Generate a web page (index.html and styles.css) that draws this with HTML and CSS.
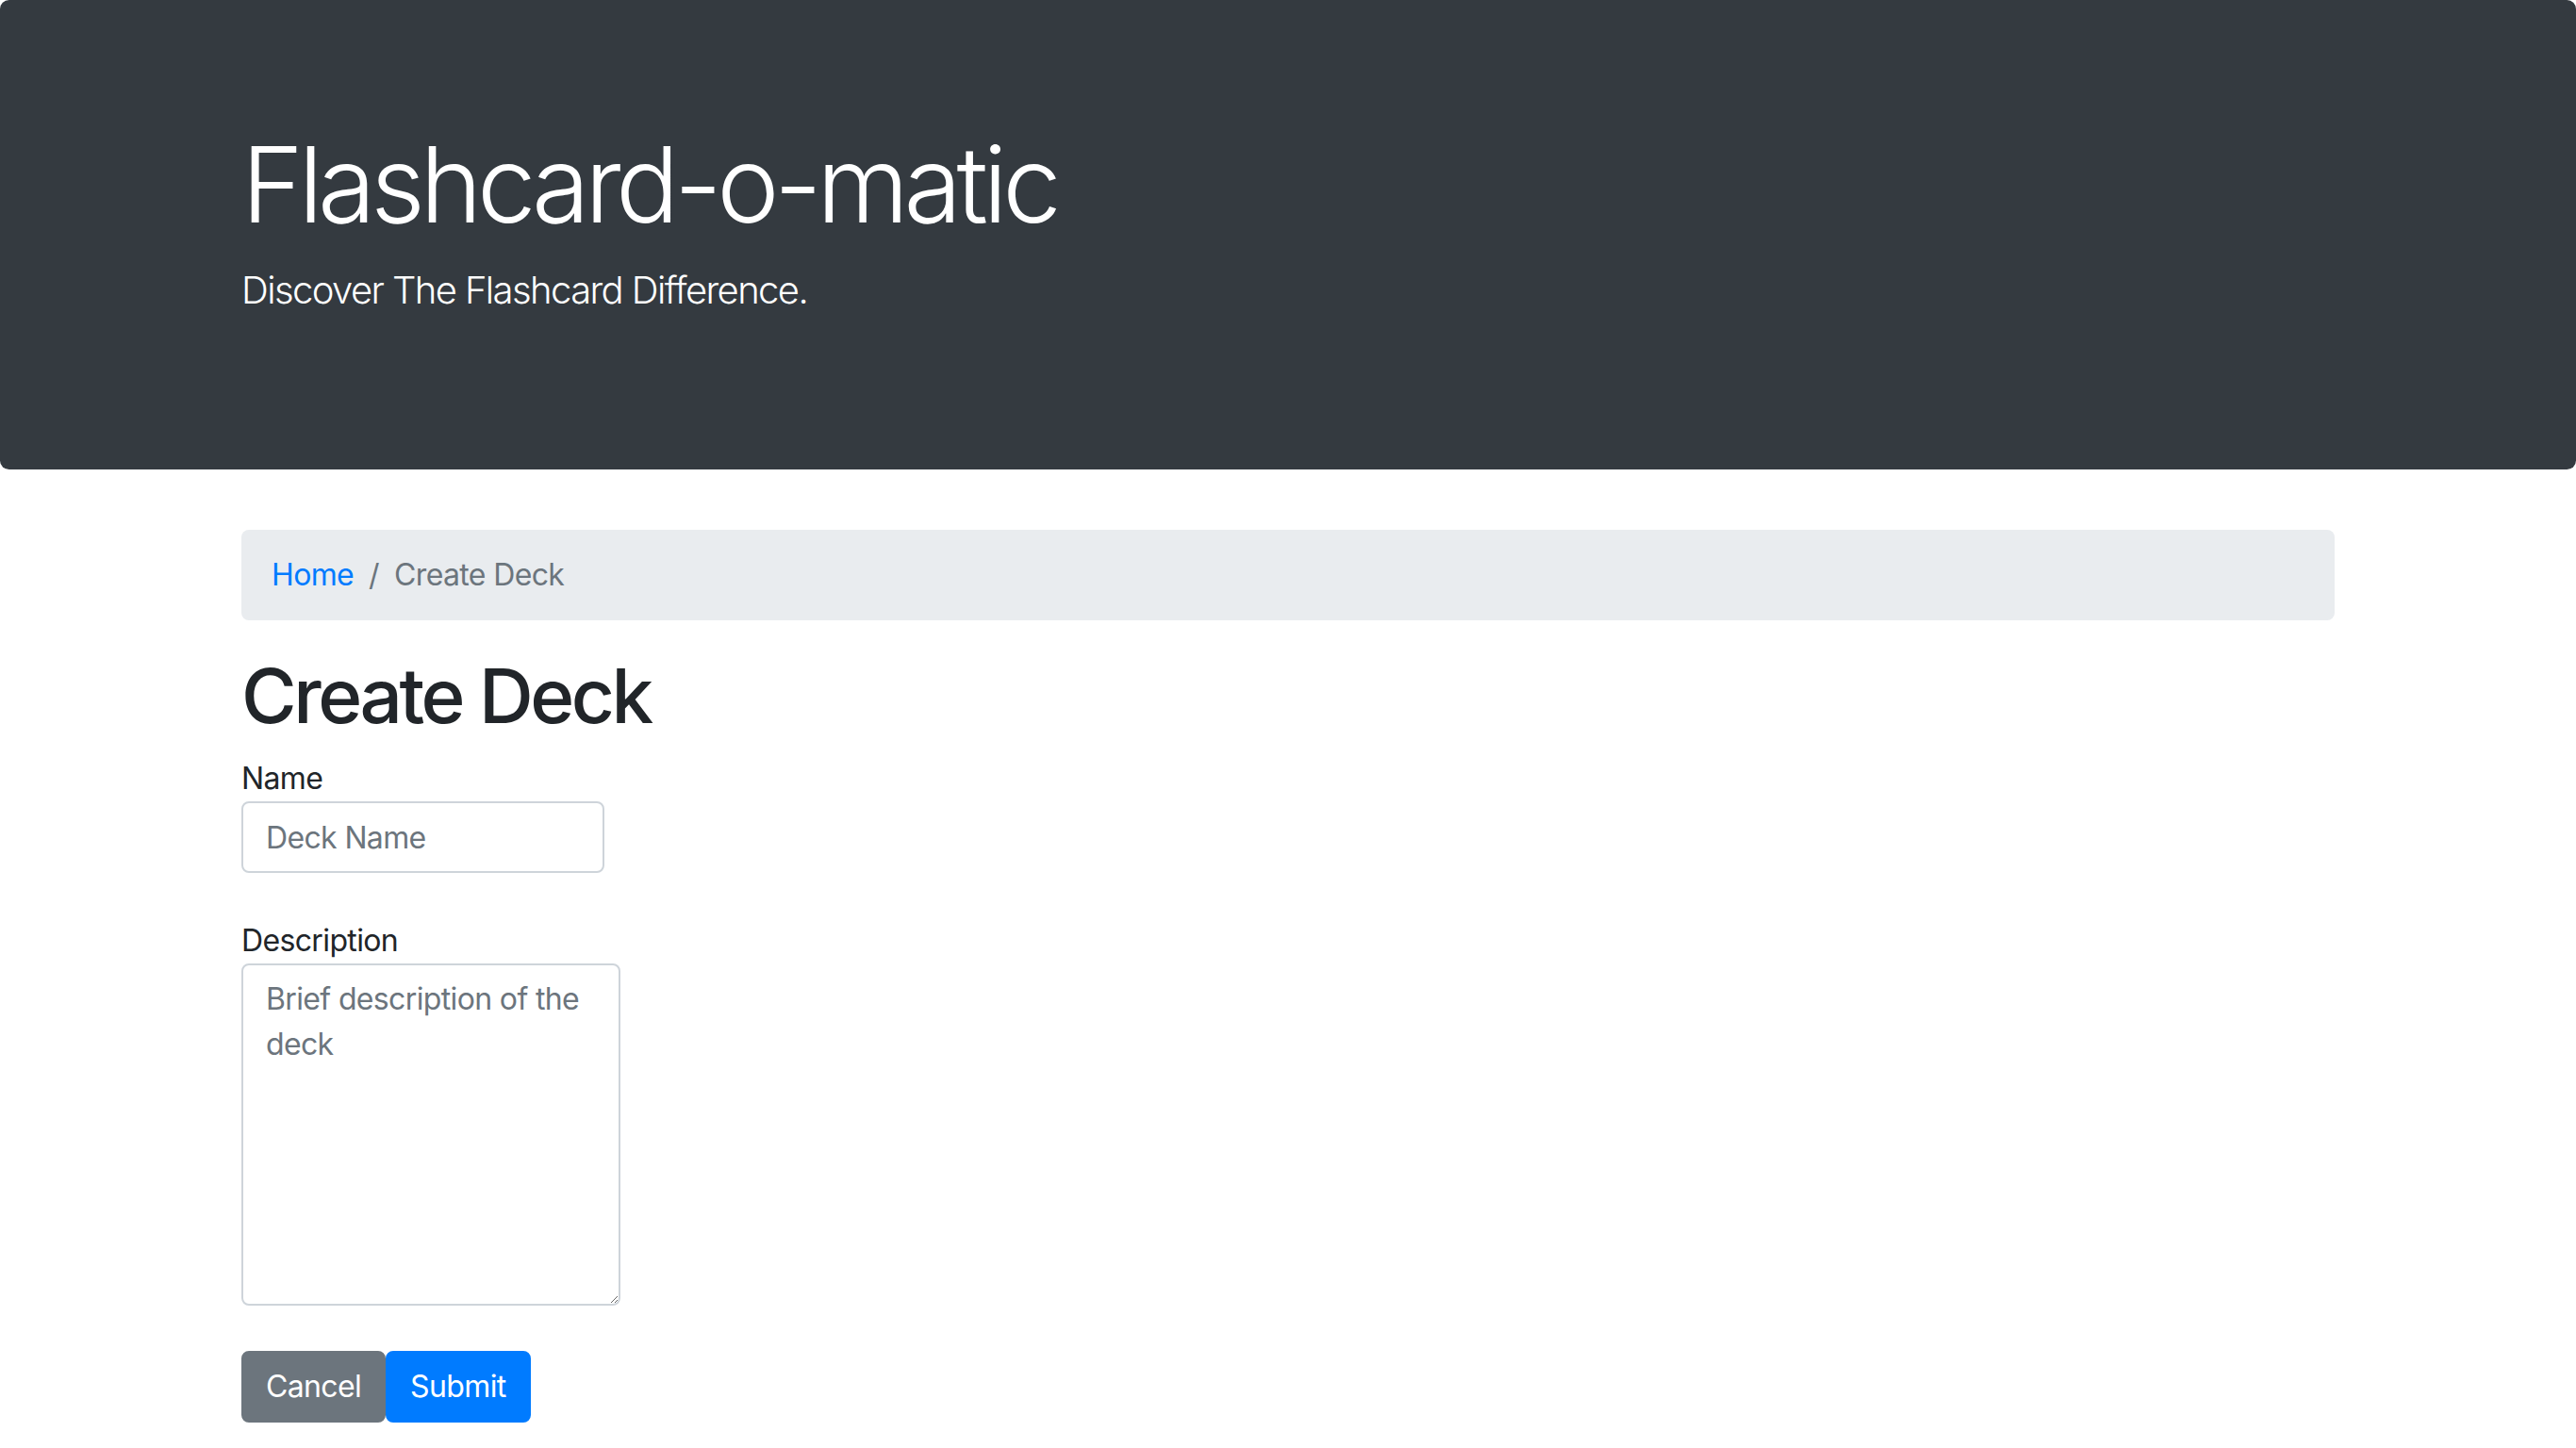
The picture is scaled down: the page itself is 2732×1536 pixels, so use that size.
FILE: index.html
```html
<!DOCTYPE html>
<html lang="en">
<head>
<meta charset="utf-8">
<title>Flashcard-o-matic</title>
<link rel="stylesheet" href="styles.css">
</head>
<body>
<header class="jumbotron">
  <div class="container">
    <h1 class="display">Flashcard-o-matic</h1>
    <p class="lead">Discover The Flashcard Difference.</p>
  </div>
</header>
<main class="container">
  <nav class="breadcrumb">
    <a class="crumb-link" href="#">Home</a>
    <span class="crumb-sep">/</span>
    <span class="crumb-active">Create Deck</span>
  </nav>
  <h2 class="page-title">Create Deck</h2>
  <form class="deck-form">
    <div class="form-group">
      <label class="form-label" for="name">Name</label>
      <input class="form-control input-name" id="name" type="text" placeholder="Deck Name">
    </div>
    <div class="form-group">
      <label class="form-label" for="description">Description</label>
      <textarea class="form-control input-desc" id="description" placeholder="Brief description of the deck"></textarea>
    </div>
    <div class="btn-row">
      <button type="button" class="btn btn-secondary">Cancel</button>
      <button type="submit" class="btn btn-primary">Submit</button>
    </div>
  </form>
</main>
</body>
</html>
```
FILE: styles.css
```css
* { box-sizing: border-box; }
html, body { margin: 0; padding: 0; }
body {
  font-family: Inter, "Liberation Sans", sans-serif;
  font-size: 32px;
  line-height: 1.5;
  letter-spacing: -0.02em;
  color: #212529;
  background: #fff;
}
.container {
  max-width: 2280px;
  margin: 0 auto;
  padding: 0 30px;
}
.jumbotron {
  background: #343a40;
  color: #fff;
  padding: 128px 0;
  border-radius: 9.6px;
  margin-bottom: 64px;
}
.display {
  margin: 0 0 16px;
  font-size: 112px;
  font-weight: 300;
  line-height: 1.2;
  letter-spacing: -0.049em;
}
.lead {
  margin: 0 0 32px;
  font-size: 40px;
  font-weight: 300;
  line-height: 1.5;
  letter-spacing: -0.04em;
}
.breadcrumb {
  display: flex;
  align-items: center;
  background: #e9ecef;
  border-radius: 8px;
  padding: 24px 32px;
  margin-bottom: 32px;
}
.crumb-link { color: #007bff; text-decoration: none; }
.crumb-sep { color: #6c757d; padding: 0 16px; }
.crumb-active { color: #6c757d; }
.page-title {
  margin: 0 0 16px;
  font-size: 80px;
  font-weight: 500;
  line-height: 1.2;
  letter-spacing: -0.043em;
}
.form-group {
  display: flex;
  flex-direction: column;
  align-items: flex-start;
  margin-bottom: 48px;
}
.form-label { display: block; margin: 0; }
.form-control {
  font-family: inherit;
  font-size: 32px;
  line-height: 1.5;
  letter-spacing: -0.02em;
  color: #495057;
  background: #fff;
  border: 2px solid #ced4da;
  border-radius: 8px;
  padding: 12px 24px;
  margin: 0;
}
.form-control::placeholder { color: #6c757d; opacity: 1; }
.input-name { width: 385px; height: 76px; }
.input-desc { width: 402px; height: 363px; resize: both; }
.btn-row { display: flex; }
.btn {
  font-family: inherit;
  font-size: 32px;
  line-height: 1.5;
  letter-spacing: -0.02em;
  padding: 12px 24px;
  border: 2px solid transparent;
  border-radius: 8px;
  color: #fff;
  cursor: pointer;
}
.btn-secondary { background: #6c757d; border-color: #6c757d; }
.btn-primary { background: #007bff; border-color: #007bff; }
```
